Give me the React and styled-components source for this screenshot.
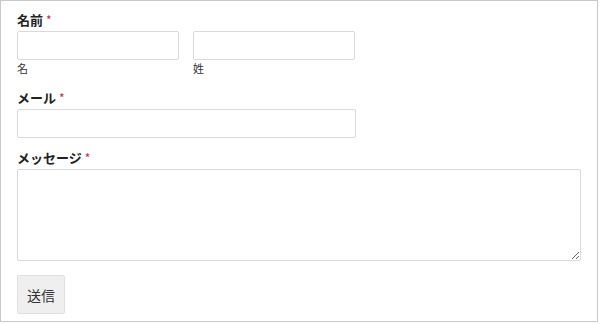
import React from "react";
import styled, { createGlobalStyle } from "styled-components";

const Global = createGlobalStyle`
  html, body { margin: 0; padding: 0; background: #fff; }
  body { font-family: "Noto Sans CJK JP", "Noto Sans", sans-serif; color: #222; }
  * { box-sizing: border-box; }
`;

const Frame = styled.form`
  width: 598px;
  height: 322px;
  border: 1px solid #c8c8c8;
  padding: 10px 16px 0 16px;
  display: flex;
  flex-direction: column;
`;

const Field = styled.div`
  display: flex;
  flex-direction: column;
  margin-bottom: ${(p) => p.$mb || 0}px;
`;

const Label = styled.label`
  font-size: 13px;
  font-weight: 700;
  line-height: 18px;
  color: #222;
  margin-bottom: ${(p) => p.$mb ?? 2}px;
`;

const Star = styled.span`
  color: #c02b4a;
  font-size: 12px;
  font-weight: 400;
  margin-left: 3px;
  vertical-align: top;
  line-height: 17px;
`;

const NameRow = styled.div`
  display: grid;
  grid-template-columns: 162px 162px;
  column-gap: 14px;
`;

const Sub = styled.div`
  display: flex;
  flex-direction: column;
`;

const Input = styled.input`
  width: ${(p) => p.$w}px;
  height: 29px;
  border: 1px solid #dadada;
  border-radius: 2px;
  background: #fff;
  padding: 4px 6px;
  font: inherit;
  font-size: 13px;
  outline: none;
`;

const SubLabel = styled.span`
  font-size: 11px;
  line-height: 16px;
  color: #333;
`;

const TextArea = styled.textarea`
  width: 564px;
  height: 92px;
  border: 1px solid #dadada;
  border-radius: 2px;
  background: #fff;
  padding: 4px 6px;
  font: inherit;
  font-size: 13px;
  outline: none;
  resize: both;
  display: block;
`;

const Button = styled.button`
  align-self: flex-start;
  width: 48px;
  height: 39px;
  background: #efefef;
  border: 1px solid #e0e0e0;
  border-radius: 2px;
  font-family: "Noto Sans CJK JP", sans-serif;
  font-size: 14px;
  color: #333;
  padding: 0;
  cursor: pointer;
`;

export default function App() {
  return (
    <>
      <Global />
      <Frame onSubmit={(e) => e.preventDefault()}>
        <Field $mb={13}>
          <Label>
            名前<Star>*</Star>
          </Label>
          <NameRow>
            <Sub>
              <Input $w={162} type="text" />
              <SubLabel>名</SubLabel>
            </Sub>
            <Sub>
              <Input $w={162} type="text" />
              <SubLabel>姓</SubLabel>
            </Sub>
          </NameRow>
        </Field>
        <Field $mb={11}>
          <Label $mb={2}>
            メール<Star>*</Star>
          </Label>
          <Input $w={339} type="email" />
        </Field>
        <Field $mb={14}>
          <Label>
            メッセージ<Star>*</Star>
          </Label>
          <TextArea />
        </Field>
        <Button type="submit">送信</Button>
      </Frame>
    </>
  );
}
